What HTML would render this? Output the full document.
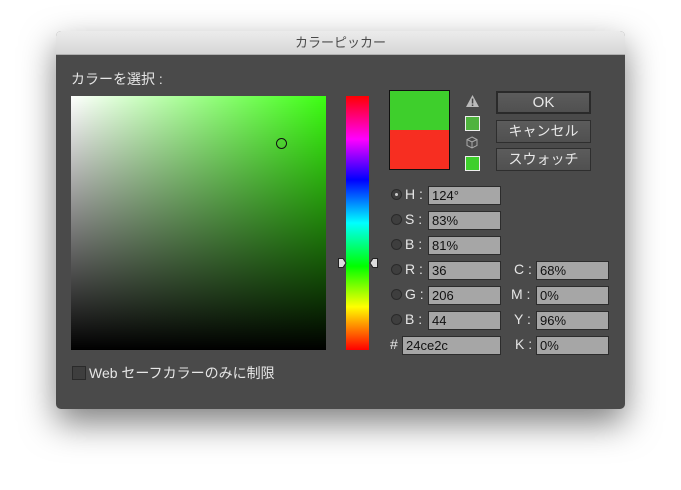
<!DOCTYPE html>
<html><head><meta charset="utf-8"><style>
body{margin:0;width:681px;height:490px;background:#fff;position:relative;overflow:hidden;font-family:"Liberation Sans","Noto Sans CJK JP",sans-serif}
.win{position:absolute;left:56px;top:31px;width:569px;height:378px;background:#4a4a4a;border-radius:5px;box-shadow:0 14px 34px rgba(0,0,0,.5);overflow:hidden}
.tb{height:23px;background:linear-gradient(#ececec,#d6d6d6);border-bottom:1px solid #b0b0b0;text-align:center;font-size:13px;line-height:23px;color:#4a4a4a}
.a{position:absolute}
.lbl{color:#e6e6e6;font-size:14px}
.inp{position:absolute;background:#a6a6a6;border:1px solid #2c2c2c;font-size:13px;line-height:17px;color:#111;padding-left:3px;box-sizing:border-box;width:73px;height:19px}
.rad{position:absolute;width:11px;height:11px;border-radius:50%;background:#3e3e3e;border:1px solid #2a2a2a;box-sizing:border-box}
.btn{position:absolute;left:440px;width:95px;height:23px;background:linear-gradient(#5c5c5c,#505050);border:1px solid #2e2e2e;box-sizing:border-box;color:#e8e8e8;font-size:14px;text-align:center;line-height:21px}
</style></head><body>
<div class="win">
<div class="tb">カラーピッカー</div>
<div class="a lbl" style="left:15px;top:38px">カラーを選択 :</div>
<div class="a" style="left:15px;top:65px;width:255px;height:254px;background:linear-gradient(to top,#000,rgba(0,0,0,0)),linear-gradient(to right,#fff,#3cff12)"></div>
<div class="a" style="left:220px;top:107px;width:9px;height:9px;border:1px solid #111;border-radius:50%"></div>
<div class="a" style="left:290px;top:65px;width:23px;height:254px;background:linear-gradient(#f00,#f0f 17%,#00f 33%,#0ff 50%,#0f0 67%,#ff0 83%,#f00)"></div>
<svg class="a" style="left:281px;top:226px" width="42" height="12"><path d="M1.5 1.5 L6 1.5 L9 6 L6 10.5 L1.5 10.5Z" fill="#ddd" stroke="#222"/><path d="M40.5 1.5 L36 1.5 L33 6 L36 10.5 L40.5 10.5Z" fill="#ddd" stroke="#222"/></svg>
<div class="a" style="left:333px;top:59px;width:61px;height:80px;border:1px solid #111;box-sizing:border-box;background:linear-gradient(#3ecf2c 50%,#f72e21 50%)"></div>
<svg class="a" style="left:409px;top:63px" width="15" height="14"><path d="M7.5 1 L14 13 L1 13Z" fill="#bbb"/><rect x="6.8" y="4.5" width="1.5" height="5" fill="#444"/><rect x="6.8" y="10.5" width="1.5" height="1.5" fill="#444"/></svg>
<div class="a" style="left:409px;top:85px;width:15px;height:15px;background:#4fb33e;border:1px solid #eee;box-sizing:border-box"></div>
<svg class="a" style="left:410px;top:105px" width="12" height="13"><path d="M6 1 L11 3.5 V9.5 L6 12 L1 9.5 V3.5Z M1 3.5 L6 6 L11 3.5 M6 6 V12" fill="none" stroke="#aaa"/></svg>
<div class="a" style="left:409px;top:125px;width:15px;height:15px;background:#3ecf2c;border:1px solid #eee;box-sizing:border-box"></div>
<div class="btn" style="top:60px;border:2px solid #2a2a2a;line-height:19px;font-size:15px">OK</div>
<div class="btn" style="top:89px">キャンセル</div>
<div class="btn" style="top:117px">スウォッチ</div>

<div class="rad" style="left:335px;top:158px"><div style="width:3px;height:3px;background:#ccc;border-radius:50%;margin:3px"></div></div>
<div class="rad" style="left:335px;top:183px"></div>
<div class="rad" style="left:335px;top:208px"></div>
<div class="rad" style="left:335px;top:233px"></div>
<div class="rad" style="left:335px;top:258px"></div>
<div class="rad" style="left:335px;top:283px"></div>
<div class="a lbl" style="left:349px;top:155px">H :</div>
<div class="a lbl" style="left:349px;top:180px">S :</div>
<div class="a lbl" style="left:349px;top:205px">B :</div>
<div class="a lbl" style="left:349px;top:230px">R :</div>
<div class="a lbl" style="left:349px;top:255px">G :</div>
<div class="a lbl" style="left:349px;top:280px">B :</div>
<div class="a lbl" style="left:334px;top:305px">#</div>
<div class="inp" style="left:372px;top:155px">124°</div>
<div class="inp" style="left:372px;top:180px">83%</div>
<div class="inp" style="left:372px;top:205px">81%</div>
<div class="inp" style="left:372px;top:230px">36</div>
<div class="inp" style="left:372px;top:255px">206</div>
<div class="inp" style="left:372px;top:280px">44</div>
<div class="inp" style="left:346px;top:305px;width:99px">24ce2c</div>
<div class="a lbl" style="left:458px;top:230px">C :</div>
<div class="a lbl" style="left:455px;top:255px">M :</div>
<div class="a lbl" style="left:458px;top:280px">Y :</div>
<div class="a lbl" style="left:459px;top:305px">K :</div>
<div class="inp" style="left:480px;top:230px">68%</div>
<div class="inp" style="left:480px;top:255px">0%</div>
<div class="inp" style="left:480px;top:280px">96%</div>
<div class="inp" style="left:480px;top:305px">0%</div>
<div class="a" style="left:16px;top:335px;width:12px;height:12px;background:#3e3e3e;border:1px solid #2a2a2a"></div>
<div class="a lbl" style="left:33px;top:332px">Web セーフカラーのみに制限</div>
</div>
</body></html>
